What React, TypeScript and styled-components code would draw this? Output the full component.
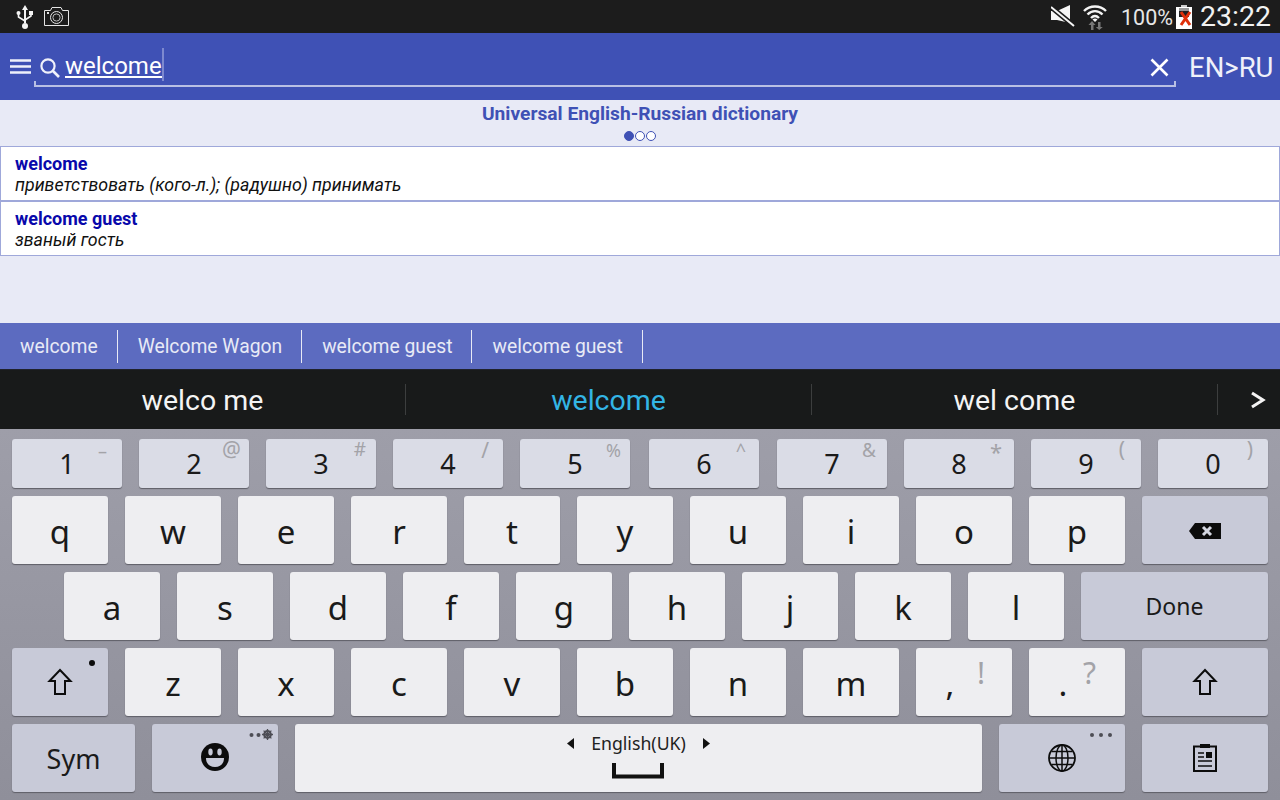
import React from "react";
import styled, { createGlobalStyle } from "styled-components";

const Global = createGlobalStyle`
  html, body { margin: 0; padding: 0; background: #000; }
  body { width: 1280px; height: 800px; overflow: hidden; font-family: Roboto, "Liberation Sans", sans-serif; }
  * { box-sizing: border-box; }
`;

const Screen = styled.div`
  width: 1280px;
  height: 800px;
  display: flex;
  flex-direction: column;
  background: #e8eaf6;
`;

const StatusBar = styled.div`
  height: 33px;
  background: #1c1c1c;
  display: flex;
  align-items: center;
  padding: 0 9px 0 16px;
  color: #eee;
`;
const StatusLeft = styled.div`
  display: flex;
  align-items: center;
  gap: 10px;
  flex: 1;
`;
const Percent = styled.span`
  font-size: 21.5px;
  color: #e6e6e6;
  margin-left: 14px;
  margin-top: 2px;
`;
const Clock = styled.span`
  font-size: 28.5px;
  color: #f2f2f2;
  margin-left: 8px;
`;
const StatusIcon = styled.svg<{ $ml?: number }>`
  display: block;
  flex: none;
  margin-left: ${(p) => p.$ml ?? 0}px;
`;

const SearchBar = styled.div`
  height: 67px;
  background: #3f51b5;
  display: flex;
  align-items: flex-start;
  padding-left: 10px;
`;
const MenuButton = styled.svg`
  margin-top: 26px;
  flex: none;
`;
const SearchField = styled.div`
  width: 1142px;
  height: 54px;
  margin-left: 3px;
  border-bottom: 2px solid #b9c0e4;
  display: flex;
  align-items: flex-start;
  padding-left: 6px;
  position: relative;
  &::before, &::after {
    content: "";
    position: absolute;
    bottom: 0;
    width: 2px;
    height: 4px;
    background: #b9c0e4;
  }
  &::before { left: 0; }
  &::after { right: 0; }
`;
const SearchGlass = styled.svg`
  margin-top: 25px;
  flex: none;
`;
const QueryText = styled.div`
  margin-left: 5px;
  margin-top: 17px;
  height: 28px;
  font-size: 24px;
  line-height: 33px;
  color: #fff;
  border-bottom: 2px solid #fff;
  position: relative;
  &::after {
    content: "";
    position: absolute;
    right: -2px;
    top: -2px;
    width: 2px;
    height: 33px;
    background: #7d89cf;
  }
`;
const ClearIcon = styled.svg`
  margin-left: auto;
  margin-right: 7px;
  margin-top: 25px;
`;
const LangSwitch = styled.div`
  margin-left: 13px;
  margin-top: 18px;
  font-size: 27.5px;
  line-height: 34px;
  color: #f0f1fa;
`;

const Content = styled.div`
  height: 223px;
  background: #e8eaf6;
  display: flex;
  flex-direction: column;
`;
const Title = styled.div`
  margin-top: 3px;
  text-align: center;
  font-size: 19.2px;
  line-height: 22px;
  font-weight: 700;
  color: #3f51b5;
`;
const Dots = styled.div`
  display: flex;
  justify-content: center;
  gap: 1px;
  margin: 6px 0 5px;
  height: 10px;
`;
const Dot = styled.span<{ $on?: boolean }>`
  width: 10px;
  height: 10px;
  border-radius: 50%;
  border: 1px solid #3f51b5;
  background: ${(p) => (p.$on ? "#3f51b5" : "#fff")};
`;
const Row = styled.div`
  height: 55px;
  background: #fff;
  border: 1px solid #9fa8da;
  padding: 6px 14px 0;
`;
const Word = styled.div`
  font-size: 18px;
  line-height: 21px;
  font-weight: 700;
  color: #0808ab;
`;
const Translation = styled.div`
  font-size: 17.8px;
  line-height: 21px;
  font-style: italic;
  color: #111;
`;

const SuggestBar = styled.div`
  height: 46px;
  background: #5c6bc0;
  display: flex;
  align-items: center;
`;
const Suggest = styled.div`
  height: 33px;
  padding: 0 19px 0 20px;
  border-right: 1px solid #e8eaf6;
  font-size: 19.3px;
  line-height: 33px;
  color: #e8eaf6;
`;

const Gap = styled.div`
  height: 1px;
  background: #20222c;
`;

const Candidates = styled.div`
  height: 59px;
  background: #181a1a;
  display: flex;
  align-items: center;
`;
const Candidate = styled.div<{ $active?: boolean; $w: number }>`
  width: ${(p) => p.$w}px;
  height: 31px;
  border-right: 1px solid #3c3e3e;
  text-align: center;
  font-size: 28.5px;
  line-height: 33px;
  margin-top: -1px;
  color: ${(p) => (p.$active ? "#33b5e5" : "#f4f4f4")};
`;
const MoreChevron = styled.svg`
  margin-left: 32px;
  margin-top: 0;
`;

const Keyboard = styled.div`
  height: 371px;
  background: linear-gradient(#9e9ea9, #8f8f9a);
  padding-top: 10px;
  display: flex;
  flex-direction: column;
  gap: 8px;
  font-family: "Noto Sans", "Open Sans", sans-serif;
`;
const KeyRow = styled.div<{ $pl?: number; $h?: number }>`
  display: flex;
  gap: 17px;
  padding-left: ${(p) => p.$pl ?? 12}px;
  height: ${(p) => p.$h ?? 68}px;
`;
const Key = styled.div<{ $w?: number; $kind?: "letter" | "num" | "fn"; $ml?: number }>`
  position: relative;
  flex: none;
  width: ${(p) => p.$w ?? 96}px;
  margin-left: ${(p) => p.$ml ?? 0}px;
  border-radius: 3px;
  background: ${(p) => (p.$kind === "num" ? "#dadce6" : p.$kind === "fn" ? "#c8cad8" : "#eeeef1")};
  box-shadow: 0 1px 1px #5f5f68;
  display: flex;
  align-items: center;
  justify-content: center;
  font-size: ${(p) => (p.$kind === "num" ? 27 : 33)}px;
  color: #1a1a1a;
`;
const KeyFace = styled.span<{ $dy?: number; $dx?: number }>`
  position: relative;
  top: ${(p) => p.$dy ?? 1}px;
  left: ${(p) => p.$dx ?? 0}px;
  line-height: 1;
`;
const Hint = styled.span<{ $r: number; $t: number; $s?: number }>`
  position: absolute;
  right: ${(p) => p.$r}px;
  top: ${(p) => p.$t}px;
  font-size: ${(p) => p.$s ?? 18}px;
  line-height: 1;
  color: #a3a3a8;
`;
const FnLabel = styled.span<{ $s: number }>`
  font-size: ${(p) => p.$s}px;
  line-height: 1;
  color: #1a1a1a;
`;
const Corner = styled.svg<{ $r?: number; $t?: number }>`
  position: absolute;
  right: ${(p) => p.$r ?? 5}px;
  top: ${(p) => p.$t ?? 5}px;
`;
const KeyIcon = styled.svg<{ $dx?: number; $dy?: number }>`
  display: block;
  position: relative;
  left: ${(p) => p.$dx ?? 0}px;
  top: ${(p) => p.$dy ?? 0}px;
`;
const SpaceBody = styled.div`
  display: flex;
  flex-direction: column;
  align-items: center;
  gap: 10px;
  margin-top: -4px;
`;
const SpaceLang = styled.div`
  display: flex;
  align-items: center;
  gap: 17px;
  font-size: 17.7px;
  line-height: 20px;
  color: #222;
`;

const Shift = () => (
  <KeyIcon width="26" height="28" viewBox="0 0 26 28">
    <path d="M13 2 L23.5 13 H18 V26 H8 V13 H2.5 Z" fill="none" stroke="#0c0c0c" strokeWidth="2" />
  </KeyIcon>
);

const numbers: [string, string, number, number, number, number?][] = [
  ["1", "–", 15, 3, 18],
  ["2", "@", 8, 0, 21],
  ["3", "#", 10, 1, 19],
  ["4", "/", 14, 1, 21],
  ["5", "%", 9, 2, 18],
  ["6", "^", 13, 2, 18, 2],
  ["7", "&", 11, 2, 19, 1],
  ["8", "*", 12, 1, 22],
  ["9", "(", 16, 0, 21],
  ["0", ")", 15, 0, 21],
];

export default function App() {
  return (
    <Screen>
      <Global />
      <StatusBar>
        <StatusLeft>
          <StatusIcon width="18" height="26" viewBox="0 0 18 26">
            <path d="M9 1 L12 6 H10 V19 H8 V6 H6 Z" fill="#f4f4f4" />
            <circle cx="9" cy="22" r="3" fill="#f4f4f4" />
            <circle cx="2.5" cy="9" r="2" fill="#f4f4f4" />
            <rect x="13" y="7" width="4" height="4" fill="#f4f4f4" />
            <path d="M2.5 10 V13 L9 17 M15 10 V12 L9 16" fill="none" stroke="#f4f4f4" strokeWidth="1.6" />
          </StatusIcon>
          <StatusIcon width="25" height="19" viewBox="0 0 25 19">
            <path d="M.5 3.5 H6.5 L8 .5 H17 L18.5 3.5 H24.5 V18.5 H.5 Z" fill="none" stroke="#e6e6e6" />
            <circle cx="12.5" cy="10.5" r="6" fill="none" stroke="#e6e6e6" />
            <circle cx="12.5" cy="10.5" r="3.6" fill="none" stroke="#bbb" />
            <rect x="3" y="5" width="2" height="2" fill="#e6e6e6" />
          </StatusIcon>
        </StatusLeft>
        <StatusIcon width="24" height="23" viewBox="0 0 24 23">
          <path d="M0 6 H6 L19 0 V18 L6 15 H0 Z" fill="#f6f6f6" />
          <path d="M0 2 L23 21" stroke="#1c1c1c" strokeWidth="5" />
          <path d="M0 2 L23 21" stroke="#f6f6f6" strokeWidth="2" />
        </StatusIcon>
        <StatusIcon $ml={8} width="24" height="26" viewBox="0 0 24 26">
          <path d="M1 7 C7 1 17 1 23 7" fill="none" stroke="#f4f4f4" strokeWidth="2.4" />
          <path d="M4.5 10.5 C9 6 15 6 19.5 10.5" fill="none" stroke="#f4f4f4" strokeWidth="2.4" />
          <path d="M8 14 C10.5 11.5 13.5 11.5 16 14" fill="none" stroke="#f4f4f4" strokeWidth="2.4" />
          <path d="M9.5 15.5 L12 18 L14.5 15.5 C13 14.3 11 14.3 9.5 15.5 Z" fill="#f4f4f4" />
          <path d="M8 26 V21 H5.5 L9 17 L12.5 21 H10.5 V26 Z" fill="#777" />
          <path d="M15 18 V23 H12.8 L16.2 26 L19.8 23 H17.5 V18 Z" fill="#777" />
        </StatusIcon>
        <Percent>100%</Percent>
        <StatusIcon $ml={3} width="16" height="24" viewBox="0 0 16 24">
          <rect x="0" y="2" width="16" height="22" fill="#fff" />
          <rect x="5" y="0" width="6" height="2" fill="#ccc" />
          <rect x="3" y="3" width="10" height="4" fill="#999" />
          <rect x="3" y="6" width="10" height="6" fill="#222" />
          <path d="M5 7 L14 20 M14 7 L5 20" stroke="#e0300a" strokeWidth="3" />
        </StatusIcon>
        <Clock>23:22</Clock>
      </StatusBar>

      <SearchBar>
        <MenuButton width="21" height="15" viewBox="0 0 21 15">
          <path d="M0 1.5 H21 M0 7.5 H21 M0 13.5 H21" stroke="#eef0fa" strokeWidth="2.4" />
        </MenuButton>
        <SearchField>
          <SearchGlass width="20" height="20" viewBox="0 0 20 20">
            <circle cx="8" cy="8" r="6.6" fill="none" stroke="#f0f1fa" strokeWidth="2.2" />
            <path d="M12.5 12.5 L19 19" stroke="#f0f1fa" strokeWidth="2.6" />
          </SearchGlass>
          <QueryText>welcome</QueryText>
          <ClearIcon width="19" height="19" viewBox="0 0 19 19">
            <path d="M1.5 1.5 L17.5 17.5 M17.5 1.5 L1.5 17.5" stroke="#fff" strokeWidth="2.6" />
          </ClearIcon>
        </SearchField>
        <LangSwitch>EN&gt;RU</LangSwitch>
      </SearchBar>

      <Content>
        <Title>Universal English-Russian dictionary</Title>
        <Dots>
          <Dot $on />
          <Dot />
          <Dot />
        </Dots>
        <Row>
          <Word>welcome</Word>
          <Translation>приветствовать (кого-л.); (радушно) принимать</Translation>
        </Row>
        <Row>
          <Word>welcome guest</Word>
          <Translation>званый гость</Translation>
        </Row>
      </Content>

      <SuggestBar>
        <Suggest>welcome</Suggest>
        <Suggest>Welcome Wagon</Suggest>
        <Suggest>welcome guest</Suggest>
        <Suggest>welcome guest</Suggest>
      </SuggestBar>
      <Gap />

      <Candidates>
        <Candidate $w={406}>welco me</Candidate>
        <Candidate $w={406} $active>welcome</Candidate>
        <Candidate $w={406}>wel come</Candidate>
        <MoreChevron width="16" height="18" viewBox="0 0 16 18">
          <path d="M2 2 L13 9 L2 16" fill="none" stroke="#f4f4f4" strokeWidth="3" />
        </MoreChevron>
      </Candidates>

      <Keyboard>
        <KeyRow $h={49}>
          {numbers.map(([n, h, r, t, s, ml]) => (
            <Key key={n} $w={110} $kind="num" $ml={ml}>
              <KeyFace $dy={0}>{n}</KeyFace>
              <Hint $r={r} $t={t} $s={s}>{h}</Hint>
            </Key>
          ))}
        </KeyRow>
        <KeyRow>
          {"qwertyuiop".split("").map((c) => (
            <Key key={c}><KeyFace>{c}</KeyFace></Key>
          ))}
          <Key $w={126} $kind="fn">
            <KeyIcon width="32" height="16" viewBox="0 0 32 16" $dy={1}>
              <path d="M0 8 L6 0 H32 V16 H6 Z" fill="#0c0c0c" />
              <path d="M14 4 L22 12 M22 4 L14 12" stroke="#d4d6e0" strokeWidth="3" />
            </KeyIcon>
          </Key>
        </KeyRow>
        <KeyRow $pl={64}>
          {"asdfghjkl".split("").map((c) => (
            <Key key={c}><KeyFace>{c}</KeyFace></Key>
          ))}
          <Key $w={187} $kind="fn"><FnLabel $s={23}>Done</FnLabel></Key>
        </KeyRow>
        <KeyRow>
          <Key $kind="fn">
            <Shift />
            <Corner width="8" height="8" viewBox="0 0 8 8" $r={12} $t={11}>
              <circle cx="4" cy="4" r="3" fill="#0c0c0c" />
            </Corner>
          </Key>
          {"zxcvbnm".split("").map((c) => (
            <Key key={c}><KeyFace>{c}</KeyFace></Key>
          ))}
          <Key>
            <KeyFace $dy={1} $dx={-14}>,</KeyFace>
            <Hint $r={27} $t={10} $s={30}>!</Hint>
          </Key>
          <Key>
            <KeyFace $dy={1} $dx={-14}>.</KeyFace>
            <Hint $r={29} $t={10} $s={30}>?</Hint>
          </Key>
          <Key $w={126} $kind="fn"><Shift /></Key>
        </KeyRow>
        <KeyRow>
          <Key $w={123} $kind="fn"><FnLabel $s={27}>Sym</FnLabel></Key>
          <Key $w={126} $kind="fn">
            <KeyIcon width="28" height="28" viewBox="0 0 28 28" $dy={-1}>
              <circle cx="14" cy="14" r="14" fill="#0c0c0c" />
              <ellipse cx="9.5" cy="9" rx="2.2" ry="3.4" fill="#c8cad8" />
              <ellipse cx="18.5" cy="9" rx="2.2" ry="3.4" fill="#c8cad8" />
              <path d="M5 15 H23 C23 21 19 24 14 24 C9 24 5 21 5 15 Z" fill="#c8cad8" />
            </KeyIcon>
            <Corner width="24" height="11" viewBox="0 0 24 11">
              <circle cx="2.5" cy="6" r="2" fill="#4d4d55" />
              <circle cx="9.5" cy="6" r="2" fill="#4d4d55" />
              <circle cx="18.5" cy="5.5" r="3.4" fill="none" stroke="#4d4d55" strokeWidth="2" />
              <path d="M18.5 0 V11 M13 5.5 H24 M14.6 1.6 L22.4 9.4 M22.4 1.6 L14.6 9.4" stroke="#4d4d55" strokeWidth="1.3" />
            </Corner>
          </Key>
          <Key $w={687}>
            <SpaceBody>
              <SpaceLang>
                <svg width="7" height="11" viewBox="0 0 7 11"><path d="M7 0 V11 L0 5.5 Z" fill="#111" /></svg>
                English(UK)
                <svg width="7" height="11" viewBox="0 0 7 11"><path d="M0 0 V11 L7 5.5 Z" fill="#111" /></svg>
              </SpaceLang>
              <KeyIcon width="52" height="16" viewBox="0 0 52 16">
                <path d="M2 0 V13.5 H50 V0" fill="none" stroke="#111" strokeWidth="4" />
              </KeyIcon>
            </SpaceBody>
          </Key>
          <Key $w={126} $kind="fn">
            <KeyIcon width="28" height="28" viewBox="0 0 28 28" fill="none" stroke="#0c0c0c">
              <circle cx="14" cy="14" r="13" strokeWidth="1.8" />
              <ellipse cx="14" cy="14" rx="6" ry="13" strokeWidth="1.5" />
              <path d="M14 1 V27 M1.5 14 H26.5 M3.5 7.5 H24.5 M3.5 20.5 H24.5" strokeWidth="1.5" />
            </KeyIcon>
            <Corner width="24" height="8" viewBox="0 0 24 8" $r={12} $t={7}>
              <circle cx="3" cy="4" r="2" fill="#4d4d55" />
              <circle cx="12" cy="4" r="2" fill="#4d4d55" />
              <circle cx="21" cy="4" r="2" fill="#4d4d55" />
            </Corner>
          </Key>
          <Key $w={126} $kind="fn">
            <KeyIcon width="24" height="28" viewBox="0 0 24 28" fill="none">
              <rect x="1" y="2.5" width="22" height="24.5" stroke="#0c0c0c" strokeWidth="2" />
              <rect x="7" y="0" width="10" height="4" fill="#0c0c0c" />
              <rect x="13" y="8" width="6" height="6" fill="#0c0c0c" />
              <path d="M5 9 H11 M5 13 H11 M5 17 H19 M5 22 H19" stroke="#0c0c0c" strokeWidth="1.6" />
            </KeyIcon>
          </Key>
        </KeyRow>
      </Keyboard>
    </Screen>
  );
}
